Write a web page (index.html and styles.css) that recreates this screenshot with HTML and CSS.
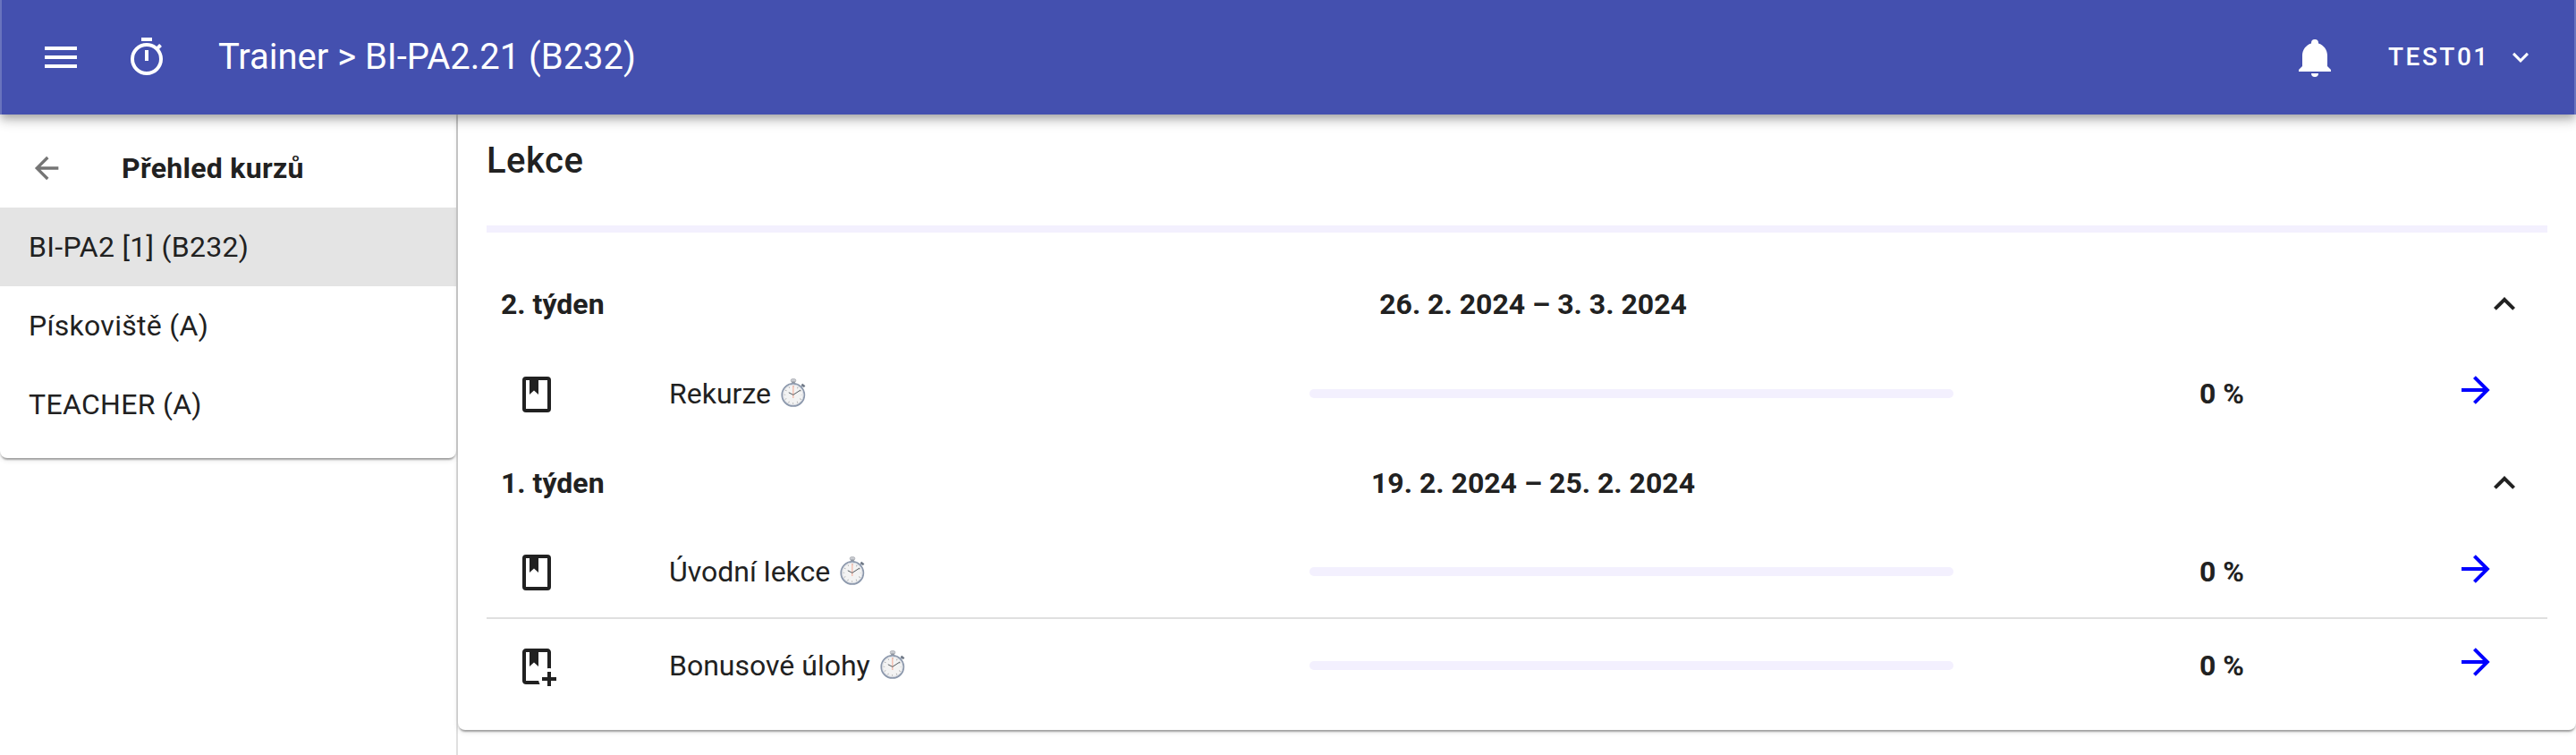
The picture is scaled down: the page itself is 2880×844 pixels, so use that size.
FILE: index.html
```html
<!DOCTYPE html>
<html lang="cs">
<head>
<meta charset="utf-8">
<title>Trainer</title>
<link rel="stylesheet" href="styles.css">
</head>
<body>
<svg class="defs" width="0" height="0" aria-hidden="true">
  <symbol id="book" viewBox="0 0 24 24"><path d="M18,2A2,2 0 0,1 20,4V20A2,2 0 0,1 18,22H6A2,2 0 0,1 4,20V4A2,2 0 0,1 6,2H18M18,4H13V12L10.5,9.75L8,12V4H6V20H18V4Z"/></symbol>
  <symbol id="book-plus" viewBox="0 0 24 24"><path d="M13.09 20H6V4H8V12L10.5 9.75L13 12V4H18V13.09C18.33 13.04 18.66 13 19 13C19.34 13 19.67 13.04 20 13.09V4C20 2.9 19.11 2 18 2H6C4.89 2 4 2.9 4 4V20C4 21.11 4.89 22 6 22H13.81C13.46 21.39 13.21 20.72 13.09 20M23 18V20H20V23H18V20H15V18H18V15H20V18H23Z"/></symbol>
  <symbol id="arrow" viewBox="0 0 24 24"><path d="M4,11V13H16L10.5,18.5L11.92,19.92L19.84,12L11.92,4.08L10.5,5.5L16,11H4Z"/></symbol>
  <symbol id="up" viewBox="0 0 24 24"><path d="M7.41,15.41L12,10.83L16.59,15.41L18,14L12,8L6,14L7.41,15.41Z"/></symbol>
  <symbol id="watch" viewBox="0 0 28 32">
    <rect x="11.2" y="0.6" width="5.6" height="3.6" rx="1.6" fill="#c9ccd1" stroke="#9a9ea6" stroke-width=".6"/>
    <rect x="12.2" y="3.6" width="3.6" height="2.8" fill="#8f949e"/>
    <path d="M22.6 9.8L24.8 7.8" stroke="#9aa3b3" stroke-width="1.6"/>
    <path d="M23.4 6.6L26.6 9.2" stroke="#6f7886" stroke-width="2.4"/>
    <circle cx="13.8" cy="18.4" r="12.5" fill="#f3f3f3" stroke="#8b97ab" stroke-width="1.8"/>
    <circle cx="13.8" cy="18.4" r="11.3" fill="none" stroke="#d2d6dd" stroke-width=".8"/>
    <circle cx="13.8" cy="18.4" r="9.4" fill="none" stroke="#a9a9a9" stroke-width="1.8" stroke-dasharray=".8 4.122" stroke-dashoffset=".4"/>
    <path d="M13.8 8V22" stroke="#f5b9a8" stroke-width="1.3"/>
    <path d="M8.8 15.8L13.8 18.4L22 13" fill="none" stroke="#555b60" stroke-width="1"/>
  </symbol>
</svg>

<header class="appbar">
  <svg class="icon" viewBox="0 0 24 24"><path d="M3,6H21V8H3V6M3,11H21V13H3V11M3,16H21V18H3V16Z"/></svg>
  <svg class="icon timer" viewBox="0 0 24 24"><path d="M12,20A7,7 0 0,1 5,13A7,7 0 0,1 12,6A7,7 0 0,1 19,13A7,7 0 0,1 12,20M19.03,7.39L20.45,5.97C20,5.46 19.55,5 19.04,4.56L17.62,6C16.07,4.74 14.12,4 12,4A9,9 0 0,0 3,13A9,9 0 0,0 12,22C17,22 21,17.97 21,13C21,10.88 20.26,8.93 19.03,7.39M11,14H13V8H11M15,1H9V3H15V1Z"/></svg>
  <div class="title">Trainer &gt; BI-PA2.21 (B232)</div>
  <svg class="icon bell" viewBox="0 0 24 24"><path d="M21,19V20H3V19L5,17V11C5,7.9 7.03,5.17 10,4.29C10,4.19 10,4.1 10,4A2,2 0 0,1 12,2A2,2 0 0,1 14,4C14,4.1 14,4.19 14,4.29C16.97,5.17 19,7.9 19,11V17L21,19M14,21A2,2 0 0,1 12,23A2,2 0 0,1 10,21"/></svg>
  <div class="user">TEST01</div>
  <svg class="icon caret" viewBox="0 0 24 24"><path d="M7.41,8.58L12,13.17L16.59,8.58L18,10L12,16L6,10L7.41,8.58Z"/></svg>
</header>

<div class="layout">
  <aside class="sidebar">
    <nav class="card courses">
      <div class="course-head">
        <svg class="icon back" viewBox="0 0 24 24"><path d="M20,11V13H8L13.5,18.5L12.08,19.92L4.16,12L12.08,4.08L13.5,5.5L8,11H20Z"/></svg>
        <span>Přehled kurzů</span>
      </div>
      <div class="course active">BI-PA2 [1] (B232)</div>
      <div class="course">Pískoviště (A)</div>
      <div class="course">TEACHER (A)</div>
    </nav>
  </aside>

  <main class="main">
    <section class="card lessons">
      <h1 class="heading">Lekce</h1>
      <div class="total"></div>

      <div class="week"><span>2. týden</span><span class="dates">26. 2. 2024 – 3. 3. 2024</span><svg class="icon"><use href="#up"/></svg></div>
      <div class="lesson">
        <svg class="icon book"><use href="#book"/></svg>
        <div class="name">Rekurze <svg class="watch"><use href="#watch"/></svg></div>
        <div class="bar"></div>
        <div class="percent">0 %</div>
        <svg class="icon go"><use href="#arrow"/></svg>
      </div>

      <div class="week"><span>1. týden</span><span class="dates">19. 2. 2024 – 25. 2. 2024</span><svg class="icon"><use href="#up"/></svg></div>
      <div class="lesson divided">
        <svg class="icon book"><use href="#book"/></svg>
        <div class="name">Úvodní lekce <svg class="watch"><use href="#watch"/></svg></div>
        <div class="bar"></div>
        <div class="percent">0 %</div>
        <svg class="icon go"><use href="#arrow"/></svg>
      </div>
      <div class="lesson">
        <svg class="icon book"><use href="#book-plus"/></svg>
        <div class="name">Bonusové úlohy <svg class="watch"><use href="#watch"/></svg></div>
        <div class="bar"></div>
        <div class="percent">0 %</div>
        <svg class="icon go"><use href="#arrow"/></svg>
      </div>
    </section>
  </main>
</div>
</body>
</html>
```

FILE: styles.css
```css
* { box-sizing: border-box; }

body {
  margin: 0;
  height: 844px;
  overflow: hidden;
  display: flex;
  flex-direction: column;
  background: #fff;
  color: #212121;
  font: 32px/48px Roboto, "Noto Sans", sans-serif;
}

.defs { display: none; }

.icon {
  width: 48px;
  height: 48px;
  flex: none;
  display: block;
  fill: currentColor;
}

.appbar {
  height: 128px;
  flex: none;
  display: flex;
  align-items: center;
  padding: 0 44px;
  background: #4450af;
  color: #fff;
  position: relative;
  z-index: 2;
  box-shadow:
    inset 2px 0 #6973be, inset -2px 0 #6973be,
    0 4px 8px -2px rgba(0, 0, 0, .2),
    0 8px 10px rgba(0, 0, 0, .14),
    0 2px 20px rgba(0, 0, 0, .12);
}
.timer { margin-left: 48px; }
.title { margin-left: 56px; font-size: 40px; letter-spacing: -.03px; white-space: nowrap; }
.bell { margin-left: auto; }
.user {
  width: 130px;
  margin-left: 58px;
  font-size: 28px;
  font-weight: 500;
  letter-spacing: 2.5px;
}
.caret { width: 36px; height: 36px; }

.layout { flex: 1; display: flex; }
.sidebar { width: 512px; flex: none; border-right: 2px solid #e0e0e0; letter-spacing: .3px; }
.main { flex: 1; }

.card {
  background: #fff;
  border-radius: 0 0 8px 8px;
  box-shadow:
    0 4px 2px -2px rgba(0, 0, 0, .2),
    0 2px 2px rgba(0, 0, 0, .14),
    0 2px 6px rgba(0, 0, 0, .12);
}

.courses { padding: 16px 0; }
.course-head {
  height: 88px;
  padding-left: 32px;
  display: flex;
  align-items: center;
  gap: 64px;
  font-weight: 700;
}
.back { width: 40px; height: 40px; color: #757575; }
.course { height: 88px; padding-left: 32px; line-height: 88px; }
.active { background: #e4e4e4; }

.lessons { height: 688px; padding: 0 32px; }
.heading {
  margin: 0;
  padding-top: 20px;
  font-size: 40px;
  line-height: 64px;
  font-weight: 500;
  letter-spacing: .5px;
}
.total { height: 8px; margin: 40px 0 32px; background: #f3f0fe; }

.week {
  height: 96px;
  padding: 0 24px 0 16px;
  display: grid;
  grid-template-columns: 794px 720px 1fr;
  align-items: center;
  font-weight: 700;
}
.week .icon { justify-self: end; }
.dates { text-align: center; }

.lesson {
  height: 104px;
  display: grid;
  grid-template-columns: 204px 716px 720px 560px 48px;
  align-items: center;
}
.divided { border-bottom: 2px solid #e0e0e0; }
.book { margin: 2px 0 0 32px; }
.name { white-space: nowrap; }
.watch { width: 28px; height: 32px; margin-left: 3px; vertical-align: -4px; }
.bar { height: 10px; border-radius: 5px; background: #f3f0fe; }
.percent { padding-left: 40px; text-align: center; font-weight: 700; }
.go { margin-bottom: 8px; color: #00f; }
.divided .go { margin-bottom: 6px; }
```
